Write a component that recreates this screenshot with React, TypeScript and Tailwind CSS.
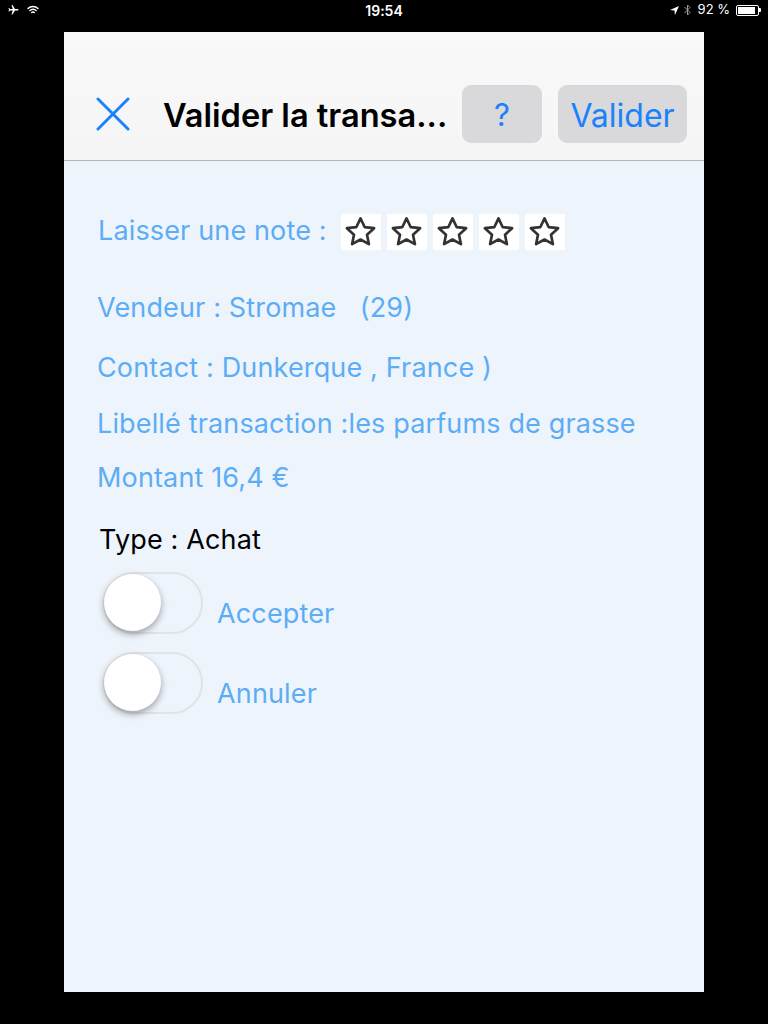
import React from "react";

const font = { fontFamily: 'Inter, "Liberation Sans", Arial, sans-serif' };

function Star() {
  return (
    <div className="w-[40px] h-[36px] bg-white flex items-center justify-center">
      <svg width="37" height="34" viewBox="0 0 24 24" fill="none">
        <polygon
          points="12,2.4 14.9,8.5 21.6,9.3 16.6,13.9 17.95,20.6 12,17.3 6.05,20.6 7.4,13.9 2.4,9.3 9.1,8.5"
          stroke="#333333"
          strokeWidth="1.9"
          strokeLinejoin="round"
        />
      </svg>
    </div>
  );
}

function Toggle() {
  return (
    <div className="relative w-[100px] h-[62px] rounded-full border-2 border-[#e2e3e5] bg-[#eef4fb] shrink-0">
      <div className="absolute left-[-1px] top-[0px] w-[57px] h-[57px] rounded-full bg-white shadow-[0_3px_7px_rgba(0,0,0,0.35)]" />
    </div>
  );
}

export default function App() {
  return (
    <div className="w-[768px] h-[1024px] bg-black overflow-hidden [font-feature-settings:'calt'_0]" style={font}>
      {/* status bar */}
      <div className="h-[20px] flex items-center justify-between px-[7px] text-white relative">
        <div className="flex items-center gap-[7px]">
          <svg width="13" height="12" viewBox="0 0 24 24" fill="white">
            <path d="M21 16v-2l-8-5V3.5a1.5 1.5 0 0 0-3 0V9l-8 5v2l8-2.5V19l-2 1.5V22l3.5-1 3.5 1v-1.5L13 19v-5.5l8 2.5z" transform="rotate(90 12 12)" />
          </svg>
          <svg width="12" height="10" viewBox="0 0 12 10" fill="none" stroke="white" strokeWidth="1.4" strokeLinecap="round">
            <path d="M1 3.6 A7 7 0 0 1 11 3.6" />
            <path d="M2.9 5.6 A4.3 4.3 0 0 1 9.1 5.6" />
            <path d="M4.7 7.5 A1.8 1.8 0 0 1 7.3 7.5" />
          </svg>
        </div>
        <div className="absolute left-0 right-0 top-0 h-[20px] flex items-center justify-center text-[14px] font-semibold">19:54</div>
        <div className="flex items-center gap-[5px] text-[13px]">
          <svg width="9" height="9" viewBox="0 0 10 10" fill="white">
            <path d="M10 0 L0 4.5 L5 5 L5.5 10 Z" />
          </svg>
          <svg width="7" height="12" viewBox="0 0 7 12" fill="none" stroke="#9a9a9a" strokeWidth="1">
            <path d="M0.5 3 L6 8.5 L3.5 11 L3.5 1 L6 3.5 L0.5 9" />
          </svg>
          <span className="ml-[2px]">92 %</span>
          <div className="flex items-center ml-[1px]">
            <div className="w-[23px] h-[11px] border border-white rounded-[2px] p-[1px]">
              <div className="h-full w-[90%] bg-white" />
            </div>
            <div className="w-[2px] h-[4px] bg-white rounded-r-[1px]" />
          </div>
        </div>
      </div>

      {/* panel */}
      <div className="ml-[64px] mt-[12px] w-[640px] h-[960px] bg-[#eef4fb] flex flex-col">
        <div className="h-[129px] bg-gradient-to-b from-[#f9f9f9] to-[#f5f5f5] border-b border-[#b4b4b4] pt-[53px]">
          <div className="h-[58px] flex items-center">
            <div className="ml-[32px] w-[34px] h-[34px]">
              <svg width="34" height="34" viewBox="0 0 34 34" stroke="#1a82fb" strokeWidth="3" strokeLinecap="round">
                <path d="M2 2 L32 32 M32 2 L2 32" />
              </svg>
            </div>
            <div className="ml-[33px] w-[290px] pt-[3px] text-[32.6px] font-semibold text-black whitespace-nowrap">
              Valider la transa...
            </div>
            <div className="ml-[9px] w-[80px] h-[58px] pt-[3px] rounded-[9px] bg-[#d9d9dc] flex items-center justify-center text-[31px] text-[#1a82fb]">
              ?
            </div>
            <div className="ml-[16px] w-[129px] h-[58px] pt-[3px] rounded-[9px] bg-[#d9d9dc] flex items-center justify-center text-[32px] text-[#1a82fb]">
              Valider
            </div>
          </div>
        </div>

        <div className="flex flex-col text-[27px] tracking-[0.15px] text-[#5dadf6] pl-[33px]">
          <div className="mt-[53px] h-[36px] flex items-center">
            <span className="ml-[1px] leading-[32px] mt-[-3px]">Laisser une note :</span>
            <div className="ml-[14px] flex gap-[6px]">
              <Star />
              <Star />
              <Star />
              <Star />
              <Star />
            </div>
          </div>
          <div className="mt-[42px] leading-[32px] h-[32px] whitespace-pre">Vendeur : Stromae   (29)</div>
          <div className="mt-[28px] leading-[32px] h-[32px]">Contact : Dunkerque , France )</div>
          <div className="mt-[24px] leading-[32px] h-[32px]">Libellé transaction :les parfums de grasse</div>
          <div className="mt-[22px] leading-[32px] h-[32px]">Montant 16,4 €</div>
          <div className="mt-[30px] leading-[32px] h-[32px] text-black ml-[2px]">Type : Achat</div>
          <div className="mt-[16px] flex items-start ml-[6px]">
            <Toggle />
            <span className="ml-[14px] mt-[26px] leading-[32px]">Accepter</span>
          </div>
          <div className="mt-[18px] flex items-start ml-[6px]">
            <Toggle />
            <span className="ml-[14px] mt-[26px] leading-[32px]">Annuler</span>
          </div>
        </div>
      </div>
    </div>
  );
}
